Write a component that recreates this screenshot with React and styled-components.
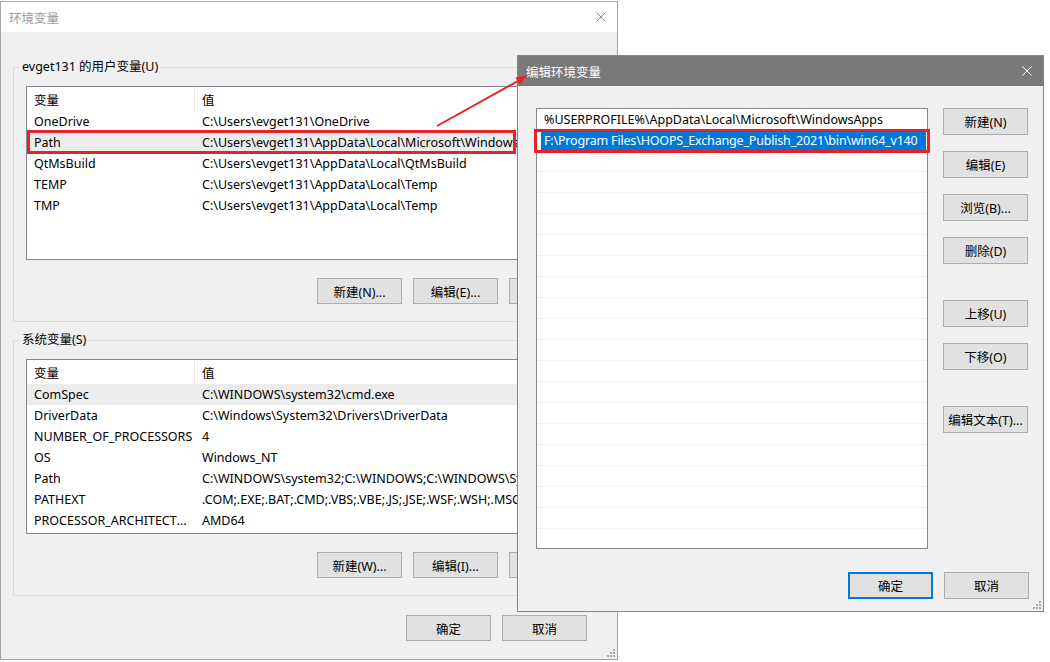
import React from 'react';
import styled, { createGlobalStyle } from 'styled-components';

const GlobalStyle = createGlobalStyle`
  html, body {
    margin: 0;
    padding: 0;
    background: #fff;
  }
  body {
    font-family: "Noto Sans", "Noto Sans CJK SC", sans-serif;
    font-size: 12.5px;
    color: #000;
  }
  * { box-sizing: border-box; }
`;

const userVars = [
  ['OneDrive', 'C:\\Users\\evget131\\OneDrive'],
  ['Path', 'C:\\Users\\evget131\\AppData\\Local\\Microsoft\\WindowsApps;'],
  ['QtMsBuild', 'C:\\Users\\evget131\\AppData\\Local\\QtMsBuild'],
  ['TEMP', 'C:\\Users\\evget131\\AppData\\Local\\Temp'],
  ['TMP', 'C:\\Users\\evget131\\AppData\\Local\\Temp'],
];

const sysVars = [
  ['ComSpec', 'C:\\WINDOWS\\system32\\cmd.exe'],
  ['DriverData', 'C:\\Windows\\System32\\Drivers\\DriverData'],
  ['NUMBER_OF_PROCESSORS', '4'],
  ['OS', 'Windows_NT'],
  ['Path', 'C:\\WINDOWS\\system32;C:\\WINDOWS;C:\\WINDOWS\\System32'],
  ['PATHEXT', '.COM;.EXE;.BAT;.CMD;.VBS;.VBE;.JS;.JSE;.WSF;.WSH;.MSC'],
  ['PROCESSOR_ARCHITECTURE', 'AMD64'],
];

const paths = [
  '%USERPROFILE%\\AppData\\Local\\Microsoft\\WindowsApps',
  'F:\\Program Files\\HOOPS_Exchange_Publish_2021\\bin\\win64_v140',
];

function CloseIcon({ color }) {
  return (
    <svg width="10" height="10" viewBox="0 0 10 10">
      <path d="M0.5 0.5 L9.5 9.5 M9.5 0.5 L0.5 9.5" stroke={color} strokeWidth="1" fill="none" />
    </svg>
  );
}

function Grip() {
  const dots = [[6, 0], [3, 3], [6, 3], [0, 6], [3, 6], [6, 6]];
  return (
    <GripBox width="8" height="8" viewBox="0 0 8 8">
      {dots.map(([x, y]) => (
        <rect key={x + '-' + y} x={x} y={y} width="2" height="2" fill="#a8a8a8" />
      ))}
    </GripBox>
  );
}

function VarList({ rows, selected, h }) {
  return (
    <List $h={h}>
      <Header>
        <HeadCell $first>变量</HeadCell>
        <HeadCell>值</HeadCell>
      </Header>
      {rows.map(([k, v], i) => (
        <Row key={k + i} $sel={i === selected}>
          <NameCell>{k}</NameCell>
          <ValueCell>{v}</ValueCell>
        </Row>
      ))}
    </List>
  );
}

export default function App() {
  const empty = Array.from({ length: 19 });
  return (
    <Desktop>
      <GlobalStyle />

      <Window $left={0} $top={1} $w={618} $h={659} $border="#a5a5a5">
        <TitleBar $bg="#fff">
          <TitleText $color="#9a9a9a">环境变量</TitleText>
          <CloseIcon color="#8a8a8a" />
        </TitleBar>
        <Body>
          <Group $mt={26}>
            <Legend>evget131 的用户变量(U)</Legend>
            <GroupInner>
              <VarList rows={userVars} selected={1} h={174} />
              <ButtonRow>
                <Button>新建(N)...</Button>
                <Button>编辑(E)...</Button>
                <Button>删除(D)</Button>
              </ButtonRow>
            </GroupInner>
          </Group>
          <Group $mt={9}>
            <Legend>系统变量(S)</Legend>
            <GroupInner>
              <VarList rows={sysVars} selected={0} h={175} />
              <ButtonRow>
                <Button>新建(W)...</Button>
                <Button>编辑(I)...</Button>
                <Button>删除(L)</Button>
              </ButtonRow>
            </GroupInner>
          </Group>
          <Footer $mt={19} $pr={18}>
            <Button>确定</Button>
            <Button>取消</Button>
          </Footer>
        </Body>
        <Grip />
      </Window>

      <Window $left={517} $top={55} $w={527} $h={557} $border="#858585">
        <TitleBar $bg="#7a7a7a">
          <TitleText $color="#fff">编辑环境变量</TitleText>
          <CloseIcon color="#fff" />
        </TitleBar>
        <EditBody>
          <EditMain>
            <PathList>
              <PathRow>{paths[0]}</PathRow>
              <PathRow $sel>
                <SelText>{paths[1]}</SelText>
              </PathRow>
              {empty.map((_, i) => (
                <PathRow key={i} />
              ))}
            </PathList>
            <SideButtons>
              <Button $h={27}>新建(N)</Button>
              <Button $h={27}>编辑(E)</Button>
              <Button $h={27}>浏览(B)...</Button>
              <Button $h={27}>删除(D)</Button>
              <Spacer $h={20} />
              <Button $h={27}>上移(U)</Button>
              <Button $h={27}>下移(O)</Button>
              <Spacer $h={20} />
              <Button $h={27}>编辑文本(T)...</Button>
            </SideButtons>
          </EditMain>
          <Footer $mt={23} $pr={0}>
            <Button $h={27} $primary>确定</Button>
            <Button $h={27}>取消</Button>
          </Footer>
        </EditBody>
        <Grip />
      </Window>

      <Mark $left={27} $top={130} $w={489} $h={24} />
      <Mark $left={534} $top={129} $w={396} $h={24} />

      <Arrow width="1050" height="662" viewBox="0 0 1050 662">
        <line x1="437" y1="126" x2="518" y2="81" stroke="#e8242a" strokeWidth="2" />
        <polygon points="528,75 519.5,84.5 515.5,77.5" fill="#e8242a" />
      </Arrow>
    </Desktop>
  );
}

const Desktop = styled.div`
  position: relative;
  width: 1050px;
  height: 662px;
  overflow: hidden;
  background: #fff;
`;

const Window = styled.div`
  position: absolute;
  left: ${p => p.$left}px;
  top: ${p => p.$top}px;
  width: ${p => p.$w}px;
  height: ${p => p.$h}px;
  border: 1px solid ${p => p.$border};
  background: #f0f0f0;
  display: flex;
  flex-direction: column;
`;

const TitleBar = styled.div`
  height: 30px;
  flex: none;
  background: ${p => p.$bg};
  display: flex;
  align-items: center;
  justify-content: space-between;
  padding: 0 11px 0 8px;
`;

const TitleText = styled.span`
  color: ${p => p.$color};
  font-size: 12.5px;
`;

const Body = styled.div`
  padding: 0 12px;
  display: flex;
  flex-direction: column;
`;

const Group = styled.fieldset`
  margin: ${p => p.$mt}px 0 0;
  padding: 0;
  border: 1px solid #dcdcdc;
  min-width: 0;
`;

const Legend = styled.legend`
  margin-left: 5px;
  padding: 0 3px;
  line-height: 18px;
  font-size: 12.5px;
`;

const GroupInner = styled.div`
  padding: 10px 10px 17px 12px;
`;

const List = styled.div`
  height: ${p => p.$h}px;
  border: 1px solid #828790;
  background: #fff;
  overflow: hidden;
`;

const Header = styled.div`
  display: flex;
  height: 24px;
  align-items: stretch;
`;

const HeadCell = styled.div`
  display: flex;
  align-items: center;
  padding-left: 7px;
  width: ${p => (p.$first ? '168px' : 'auto')};
  flex: ${p => (p.$first ? 'none' : '1')};
  border-right: ${p => (p.$first ? '1px solid #e5e5e5' : 'none')};
`;

const Row = styled.div`
  display: flex;
  align-items: center;
  height: 21px;
  background: ${p => (p.$sel ? '#ececec' : 'transparent')};
  white-space: nowrap;
`;

const NameCell = styled.div`
  width: 168px;
  flex: none;
  padding-left: 7px;
  padding-right: 1px;
  overflow: hidden;
  text-overflow: ellipsis;
`;

const ValueCell = styled.div`
  flex: 1;
  padding-left: 7px;
  overflow: hidden;
`;

const ButtonRow = styled.div`
  display: flex;
  justify-content: flex-end;
  gap: 11px;
  margin-top: 18px;
`;

const Button = styled.div`
  width: 85px;
  height: ${p => p.$h || 26}px;
  flex: none;
  display: flex;
  align-items: center;
  justify-content: center;
  background: #e1e1e1;
  border: ${p => (p.$primary ? '2px solid #0078d7' : '1px solid #adadad')};
  font-size: 12.5px;
  white-space: nowrap;
`;

const Footer = styled.div`
  display: flex;
  justify-content: flex-end;
  gap: 11px;
  margin-top: ${p => p.$mt}px;
  padding-right: ${p => p.$pr}px;
`;

const EditBody = styled.div`
  padding: 22px 14px 10px 18px;
  display: flex;
  flex-direction: column;
`;

const EditMain = styled.div`
  display: flex;
  gap: 15px;
`;

const PathList = styled.div`
  width: 392px;
  height: 441px;
  border: 1px solid #828790;
  background: #fff;
  overflow: hidden;
`;

const PathRow = styled.div`
  height: 21px;
  display: flex;
  align-items: center;
  padding-left: ${p => (p.$sel ? '4px' : '7px')};
  padding-right: ${p => (p.$sel ? '1px' : '0')};
  border-bottom: 1px solid ${p => (p.$sel ? '#fff' : '#f0f0f0')};
  white-space: nowrap;
`;

const SelText = styled.div`
  flex: 1;
  align-self: stretch;
  display: flex;
  align-items: center;
  padding-left: 3px;
  background: #0078d7;
  color: #fff;
  letter-spacing: -0.18px;
`;

const SideButtons = styled.div`
  display: flex;
  flex-direction: column;
  gap: 16px;
`;

const Spacer = styled.div`
  height: ${p => p.$h}px;
  margin-top: -16px;
  flex: none;
`;

const GripBox = styled.svg`
  position: absolute;
  right: 2px;
  bottom: 2px;
`;

const Mark = styled.div`
  position: absolute;
  left: ${p => p.$left}px;
  top: ${p => p.$top}px;
  width: ${p => p.$w}px;
  height: ${p => p.$h}px;
  border: 3px solid #e8202a;
`;

const Arrow = styled.svg`
  position: absolute;
  left: 0;
  top: 0;
  pointer-events: none;
`;
